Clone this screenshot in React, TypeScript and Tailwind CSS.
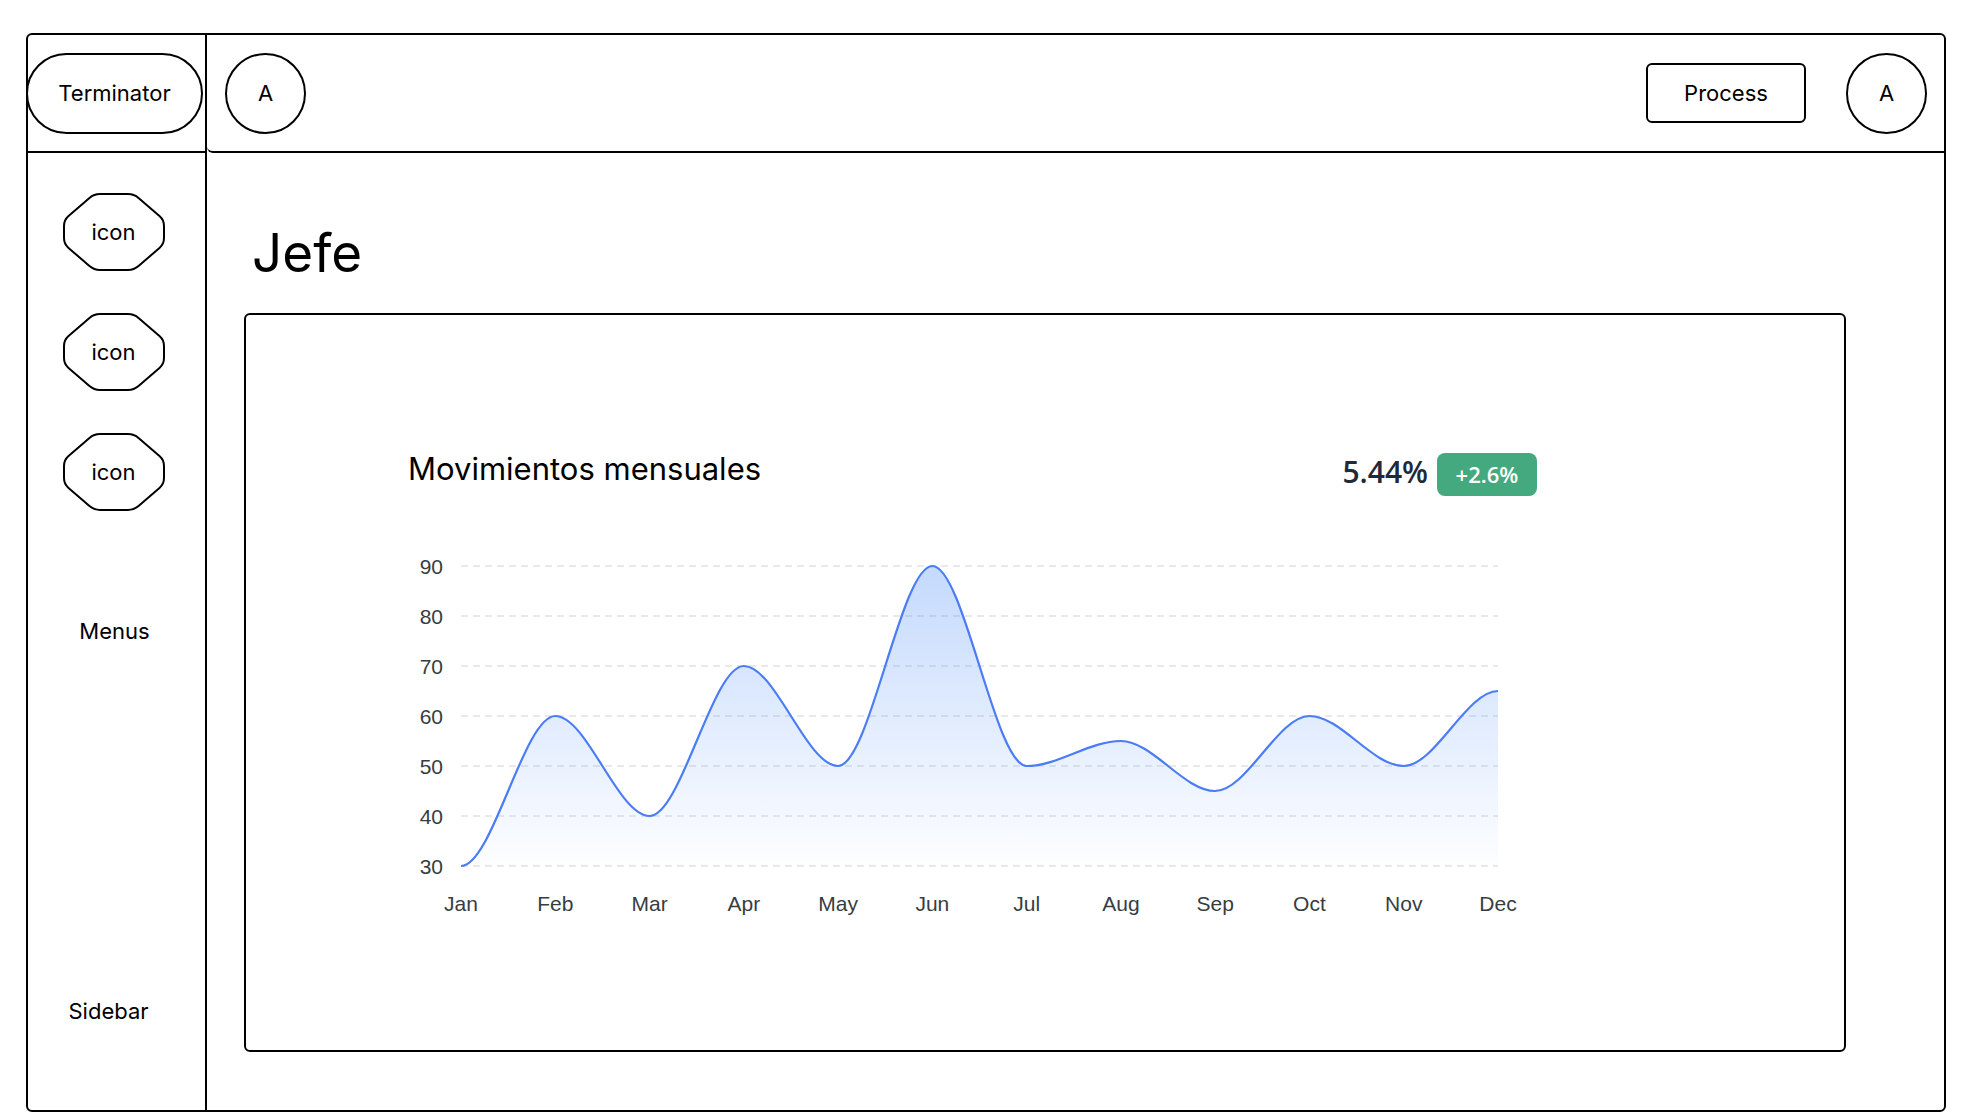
import React from 'react';

// Datos del grafico
const MESES = ['Jan', 'Feb', 'Mar', 'Apr', 'May', 'Jun', 'Jul', 'Aug', 'Sep', 'Oct', 'Nov', 'Dec'];
const VALORES = [30, 60, 40, 70, 50, 90, 50, 55, 45, 60, 50, 65];
const TICKS = [90, 80, 70, 60, 50, 40, 30];

const X0 = 53;
const X1 = 1090;
const Y_TOP = 26;
const Y_BOT = 326;

const px = (i: number) => X0 + ((X1 - X0) * i) / (MESES.length - 1);
const py = (v: number) => Y_BOT - ((v - 30) / 60) * (Y_BOT - Y_TOP);

function buildLine() {
  let d = `M ${px(0)} ${py(VALORES[0])}`;
  for (let i = 1; i < VALORES.length; i++) {
    const xa = px(i - 1);
    const xb = px(i);
    const dx = (xb - xa) / 3;
    d += ` C ${xa + dx} ${py(VALORES[i - 1])}, ${xb - dx} ${py(VALORES[i])}, ${xb} ${py(VALORES[i])}`;
  }
  return d;
}

// octagono con esquinas redondeadas
const OCT: [number, number][] = [
  [31, 1], [71, 1], [101, 27], [101, 51], [71, 77], [31, 77], [1, 51], [1, 27],
];

function roundedPath(pts: [number, number][], r: number) {
  const n = pts.length;
  let d = '';
  for (let i = 0; i < n; i++) {
    const [x, y] = pts[i];
    const [ax, ay] = pts[(i - 1 + n) % n];
    const [bx, by] = pts[(i + 1) % n];
    const la = Math.hypot(ax - x, ay - y);
    const lb = Math.hypot(bx - x, by - y);
    const p1 = [x + ((ax - x) / la) * r, y + ((ay - y) / la) * r];
    const p2 = [x + ((bx - x) / lb) * r, y + ((by - y) / lb) * r];
    d += `${i === 0 ? 'M' : 'L'} ${p1[0]} ${p1[1]} Q ${x} ${y} ${p2[0]} ${p2[1]} `;
  }
  return d + 'Z';
}

const OCT_PATH = roundedPath(OCT, 6);

function Octagon() {
  return (
    <div className="relative w-[102px] h-[78px] flex items-center justify-center">
      <svg className="absolute inset-0" width="102" height="78" viewBox="0 0 102 78">
        <path d={OCT_PATH} fill="white" stroke="black" strokeWidth="2" />
      </svg>
      <span className="relative text-[22px] text-black">icon</span>
    </div>
  );
}

function Chart() {
  const line = buildLine();
  const area = `${line} L ${X1} ${Y_BOT} L ${X0} ${Y_BOT} Z`;
  const font = "'Liberation Sans', Arial, sans-serif";

  return (
    <svg width="1130" height="390" viewBox="0 0 1130 390" className="mt-[44px]">
      <defs>
        <linearGradient id="areaFill" x1="0" y1="0" x2="0" y2="1">
          <stop offset="0%" stopColor="#3b82f6" stopOpacity="0.3" />
          <stop offset="100%" stopColor="#3b82f6" stopOpacity="0.01" />
        </linearGradient>
      </defs>
      {TICKS.map((t) => (
        <g key={t}>
          <line x1={X0} x2={X1} y1={py(t)} y2={py(t)} stroke="#e2e2e2" strokeWidth="1.5" strokeDasharray="7 5" />
          <text x={35} y={py(t) + 7.5} textAnchor="end" fontSize="21" fill="#373d3f" fontFamily={font}>
            {t}
          </text>
        </g>
      ))}
      <path d={area} fill="url(#areaFill)" />
      <path d={line} fill="none" stroke="#4a7cf6" strokeWidth="2.2" />
      {MESES.map((m, i) => (
        <text key={m} x={px(i)} y={370.5} textAnchor="middle" fontSize="21" fill="#373d3f" fontFamily={font}>
          {m}
        </text>
      ))}
    </svg>
  );
}

export default function App() {
  return (
    <div className="w-[1986px] h-[1120px] bg-white pt-[33px] pl-[26px] font-['Inter',sans-serif] text-black">
      <div className="w-[1920px] h-[1079px] border-2 border-black rounded-[6px] flex">
        {/* Sidebar */}
        <aside className="w-[179px] border-r-2 border-black flex flex-col items-center">
          <div className="w-full h-[118px] border-b-2 border-black flex items-center">
            <div className="-ml-[2px] w-[177px] h-[81px] rounded-full border-2 border-black flex items-center justify-center text-[22px]">
              Terminator
            </div>
          </div>
          <div className="flex flex-col gap-[42px] mt-[40px] pr-[6px]">
            <Octagon />
            <Octagon />
            <Octagon />
          </div>
          <p className="mt-[107px] text-[22px] leading-[26px] pr-[4px]">Menus</p>
          <p className="mt-auto mb-[86px] text-[22px] leading-[26px] pr-[16px]">Sidebar</p>
        </aside>

        {/* Main */}
        <div className="flex-1 flex flex-col">
          <header className="h-[118px] border-b-2 border-black rounded-bl-[6px] flex items-center pl-[18px] pr-[17px]">
            <div className="w-[81px] h-[81px] rounded-full border-2 border-black flex items-center justify-center text-[22px]">
              A
            </div>
            <div className="ml-auto w-[160px] h-[60px] rounded-[6px] border-2 border-black flex items-center justify-center text-[22px]">
              Process
            </div>
            <div className="ml-[40px] w-[81px] h-[81px] rounded-full border-2 border-black flex items-center justify-center text-[22px]">
              A
            </div>
          </header>

          <main className="pt-[73px] pl-[37px]">
            <h1 className="ml-[8px] text-[53px] leading-[54px] font-normal">Jefe</h1>
            <div className="mt-[33px] w-[1602px] h-[739px] border-2 border-black rounded-[6px] pl-[162px] pt-[138px]">
              <div className="w-[1129px] h-[43px] flex items-center justify-between">
                <h2 className="mb-[12px] text-[31px] leading-[36px]">Movimientos mensuales</h2>
                <div className="flex items-center gap-[9px]">
                  <span className="mb-[6px] font-['Open_Sans',sans-serif] font-semibold text-[30px] leading-[36px] text-[#1f2937]">
                    5.44%
                  </span>
                  <span className="w-[100px] h-[43px] rounded-[8px] bg-[#45a97f] text-white font-['Open_Sans',sans-serif] font-semibold text-[22px] flex items-center justify-center">
                    +2.6%
                  </span>
                </div>
              </div>
              <Chart />
            </div>
          </main>
        </div>
      </div>
    </div>
  );
}
